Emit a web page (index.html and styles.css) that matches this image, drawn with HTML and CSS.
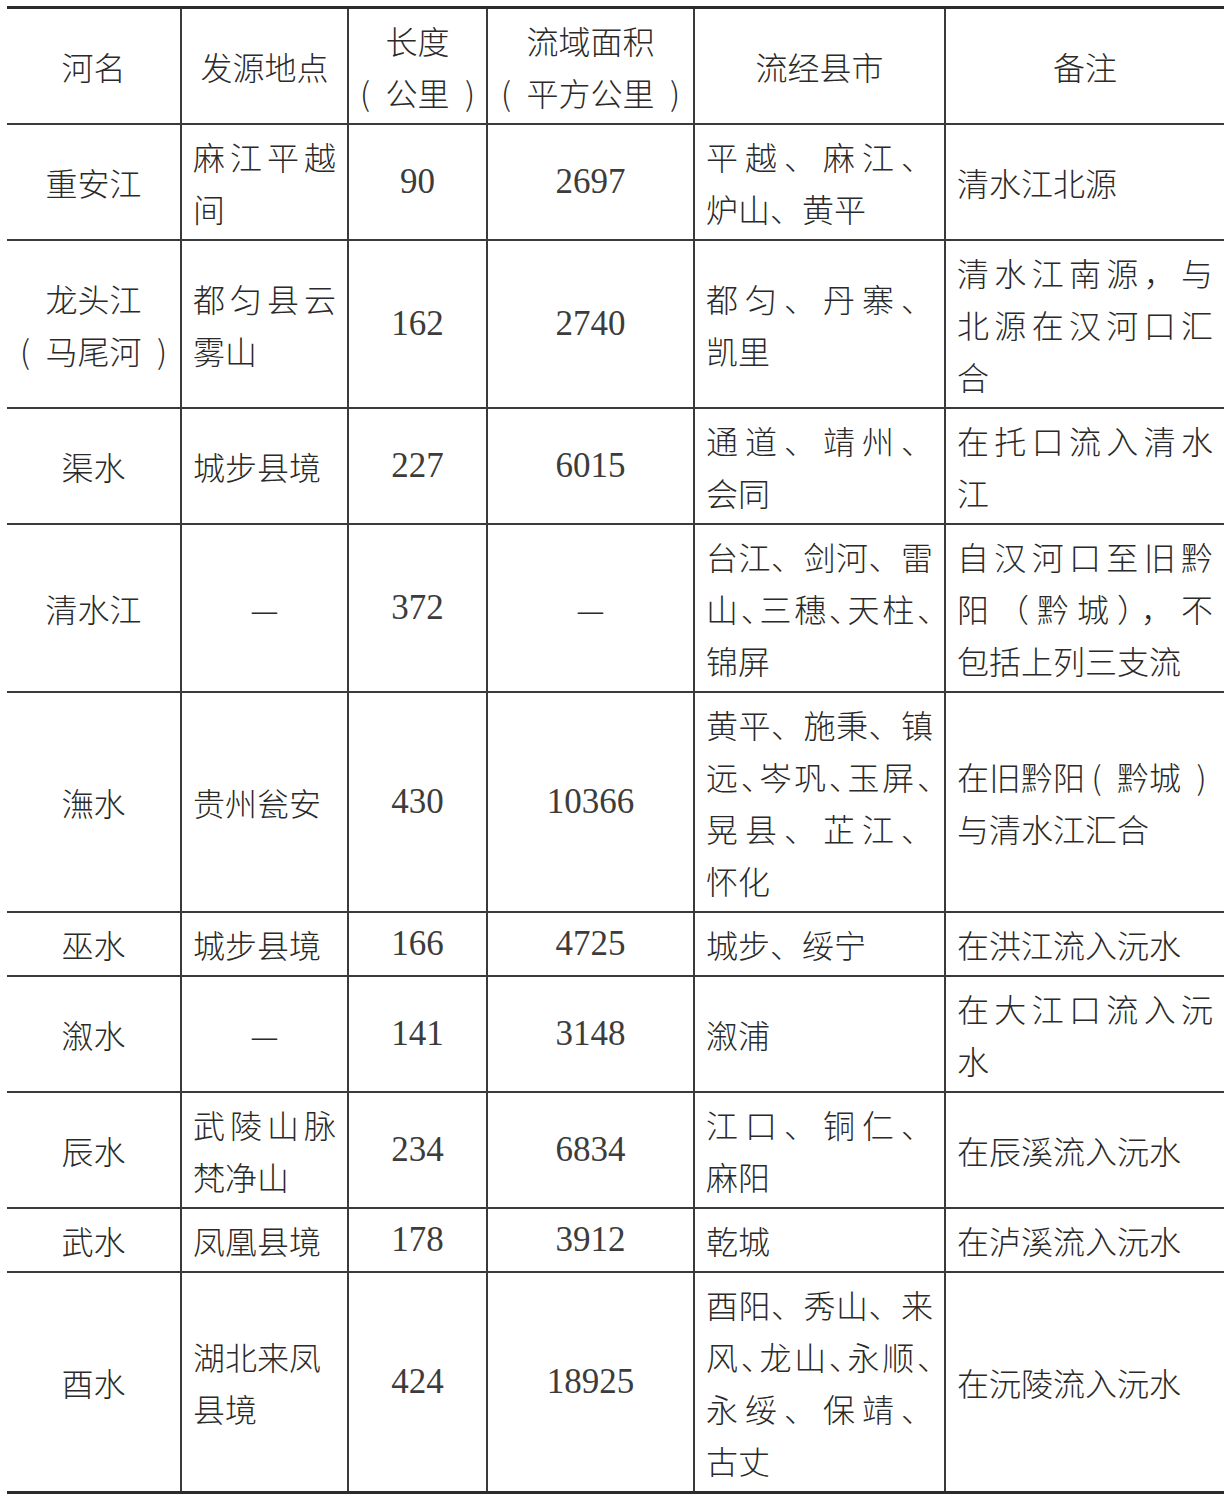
FILE: index.html
```html
<!DOCTYPE html>
<html lang="zh-CN">
<head>
<meta charset="utf-8">
<title>河流表</title>
<link rel="stylesheet" href="styles.css">
</head>
<body>
<table class="rivers">
  <colgroup>
    <col class="c1"><col class="c2"><col class="c3"><col class="c4"><col class="c5"><col class="c6">
  </colgroup>
  <thead>
    <tr>
      <th>河名</th>
      <th>发源地点</th>
      <th><div class="ln">长度</div><div class="ln"><span class="po">(</span>公里<span class="pc">)</span></div></th>
      <th><div class="ln">流域面积</div><div class="ln"><span class="po">(</span>平方公里<span class="pc">)</span></div></th>
      <th>流经县市</th>
      <th>备注</th>
    </tr>
  </thead>
  <tbody>
    <tr>
      <td class="name">重安江</td>
      <td class="txt"><div class="ln j">麻江平越</div><div class="ln">间</div></td>
      <td class="num">90</td>
      <td class="num">2697</td>
      <td class="txt"><div class="ln j">平越、麻江、</div><div class="ln">炉山、黄平</div></td>
      <td class="txt">清水江北源</td>
    </tr>
    <tr>
      <td class="name"><div class="ln">龙头江</div><div class="ln"><span class="po">(</span>马尾河<span class="pc">)</span></div></td>
      <td class="txt"><div class="ln j">都匀县云</div><div class="ln">雾山</div></td>
      <td class="num">162</td>
      <td class="num">2740</td>
      <td class="txt"><div class="ln j">都匀、丹寨、</div><div class="ln">凯里</div></td>
      <td class="txt"><div class="ln j">清水江南源，与</div><div class="ln j">北源在汉河口汇</div><div class="ln">合</div></td>
    </tr>
    <tr>
      <td class="name">渠水</td>
      <td class="txt">城步县境</td>
      <td class="num">227</td>
      <td class="num">6015</td>
      <td class="txt"><div class="ln j">通道、靖州、</div><div class="ln">会同</div></td>
      <td class="txt"><div class="ln j">在托口流入清水</div><div class="ln">江</div></td>
    </tr>
    <tr>
      <td class="name">清水江</td>
      <td class="name">—</td>
      <td class="num">372</td>
      <td class="name">—</td>
      <td class="txt"><div class="ln j">台江、剑河、雷</div><div class="ln j h">山、三穗、天柱、</div><div class="ln">锦屏</div></td>
      <td class="txt"><div class="ln j">自汉河口至旧黔</div><div class="ln j">阳（黔城），不</div><div class="ln">包括上列三支流</div></td>
    </tr>
    <tr>
      <td class="name">潕水</td>
      <td class="txt">贵州瓮安</td>
      <td class="num">430</td>
      <td class="num">10366</td>
      <td class="txt"><div class="ln j">黄平、施秉、镇</div><div class="ln j h">远、岑巩、玉屏、</div><div class="ln j">晃县、芷江、</div><div class="ln">怀化</div></td>
      <td class="txt"><div class="ln">在旧黔阳<span class="po">(</span>黔城<span class="pc">)</span></div><div class="ln">与清水江汇合</div></td>
    </tr>
    <tr>
      <td class="name">巫水</td>
      <td class="txt">城步县境</td>
      <td class="num">166</td>
      <td class="num">4725</td>
      <td class="txt">城步、绥宁</td>
      <td class="txt">在洪江流入沅水</td>
    </tr>
    <tr>
      <td class="name">溆水</td>
      <td class="name">—</td>
      <td class="num">141</td>
      <td class="num">3148</td>
      <td class="txt">溆浦</td>
      <td class="txt"><div class="ln j">在大江口流入沅</div><div class="ln">水</div></td>
    </tr>
    <tr>
      <td class="name">辰水</td>
      <td class="txt"><div class="ln j">武陵山脉</div><div class="ln">梵净山</div></td>
      <td class="num">234</td>
      <td class="num">6834</td>
      <td class="txt"><div class="ln j">江口、铜仁、</div><div class="ln">麻阳</div></td>
      <td class="txt">在辰溪流入沅水</td>
    </tr>
    <tr>
      <td class="name">武水</td>
      <td class="txt">凤凰县境</td>
      <td class="num">178</td>
      <td class="num">3912</td>
      <td class="txt">乾城</td>
      <td class="txt">在泸溪流入沅水</td>
    </tr>
    <tr>
      <td class="name">酉水</td>
      <td class="txt"><div class="ln">湖北来凤</div><div class="ln">县境</div></td>
      <td class="num">424</td>
      <td class="num">18925</td>
      <td class="txt"><div class="ln j">酉阳、秀山、来</div><div class="ln j h">风、龙山、永顺、</div><div class="ln j">永绥、保靖、</div><div class="ln">古丈</div></td>
      <td class="txt">在沅陵流入沅水</td>
    </tr>
  </tbody>
</table>
</body>
</html>
```

FILE: styles.css
```css
html, body {
  margin: 0;
  padding: 0;
  background: #ffffff;
}

body {
  padding: 6px 5px 0 7px;
  font-family: "Noto Sans CJK SC", "Noto Sans CJK TC", sans-serif;
  font-weight: 300;
  font-size: 32px;
  color: #2a2a2a;
}

.rivers {
  width: 1217px;
  table-layout: fixed;
  border-collapse: collapse;
  border-top: 3px solid #2b2b2b;
  border-bottom: 3px solid #2b2b2b;
}

.c1 { width: 174px; }
.c2 { width: 167px; }
.c3 { width: 139px; }
.c4 { width: 207px; }
.c5 { width: 251px; }
.c6 { width: 279px; }

.rivers th,
.rivers td {
  border: 2px solid #3a3a3a;
  padding: 5px 11px;
  line-height: 52px;
  vertical-align: middle;
  white-space: nowrap;
  overflow: visible;
}

.rivers tr > :first-child { border-left: none; }
.rivers tr > :last-child { border-right: none; }

.rivers thead tr th { border-top: none; }
.rivers tbody tr:last-child td { border-bottom: none; }

.rivers th {
  font-weight: 300;
  text-align: center;
  padding: 5px 2px;
}

.rivers td.name {
  text-align: center;
  padding: 5px 2px;
}

.rivers td.num {
  text-align: center;
  font-family: "Liberation Serif", "Times New Roman", serif;
  font-weight: 400;
  font-size: 35px;
  color: #3c3c3c;
}

.rivers td.txt {
  text-align: left;
}

.ln {
  display: block;
}

.ln.j {
  text-align: justify;
  text-align-last: justify;
  text-justify: inter-character;
}

.ln.h {
  font-feature-settings: "halt" 1;
}

.po,
.pc {
  display: inline-block;
  width: 1em;
  font-weight: 200;
  box-sizing: border-box;
}

.po {
  text-align: left;
  padding-left: 0.2em;
}

.pc {
  text-align: right;
  padding-right: 0.2em;
}
```
